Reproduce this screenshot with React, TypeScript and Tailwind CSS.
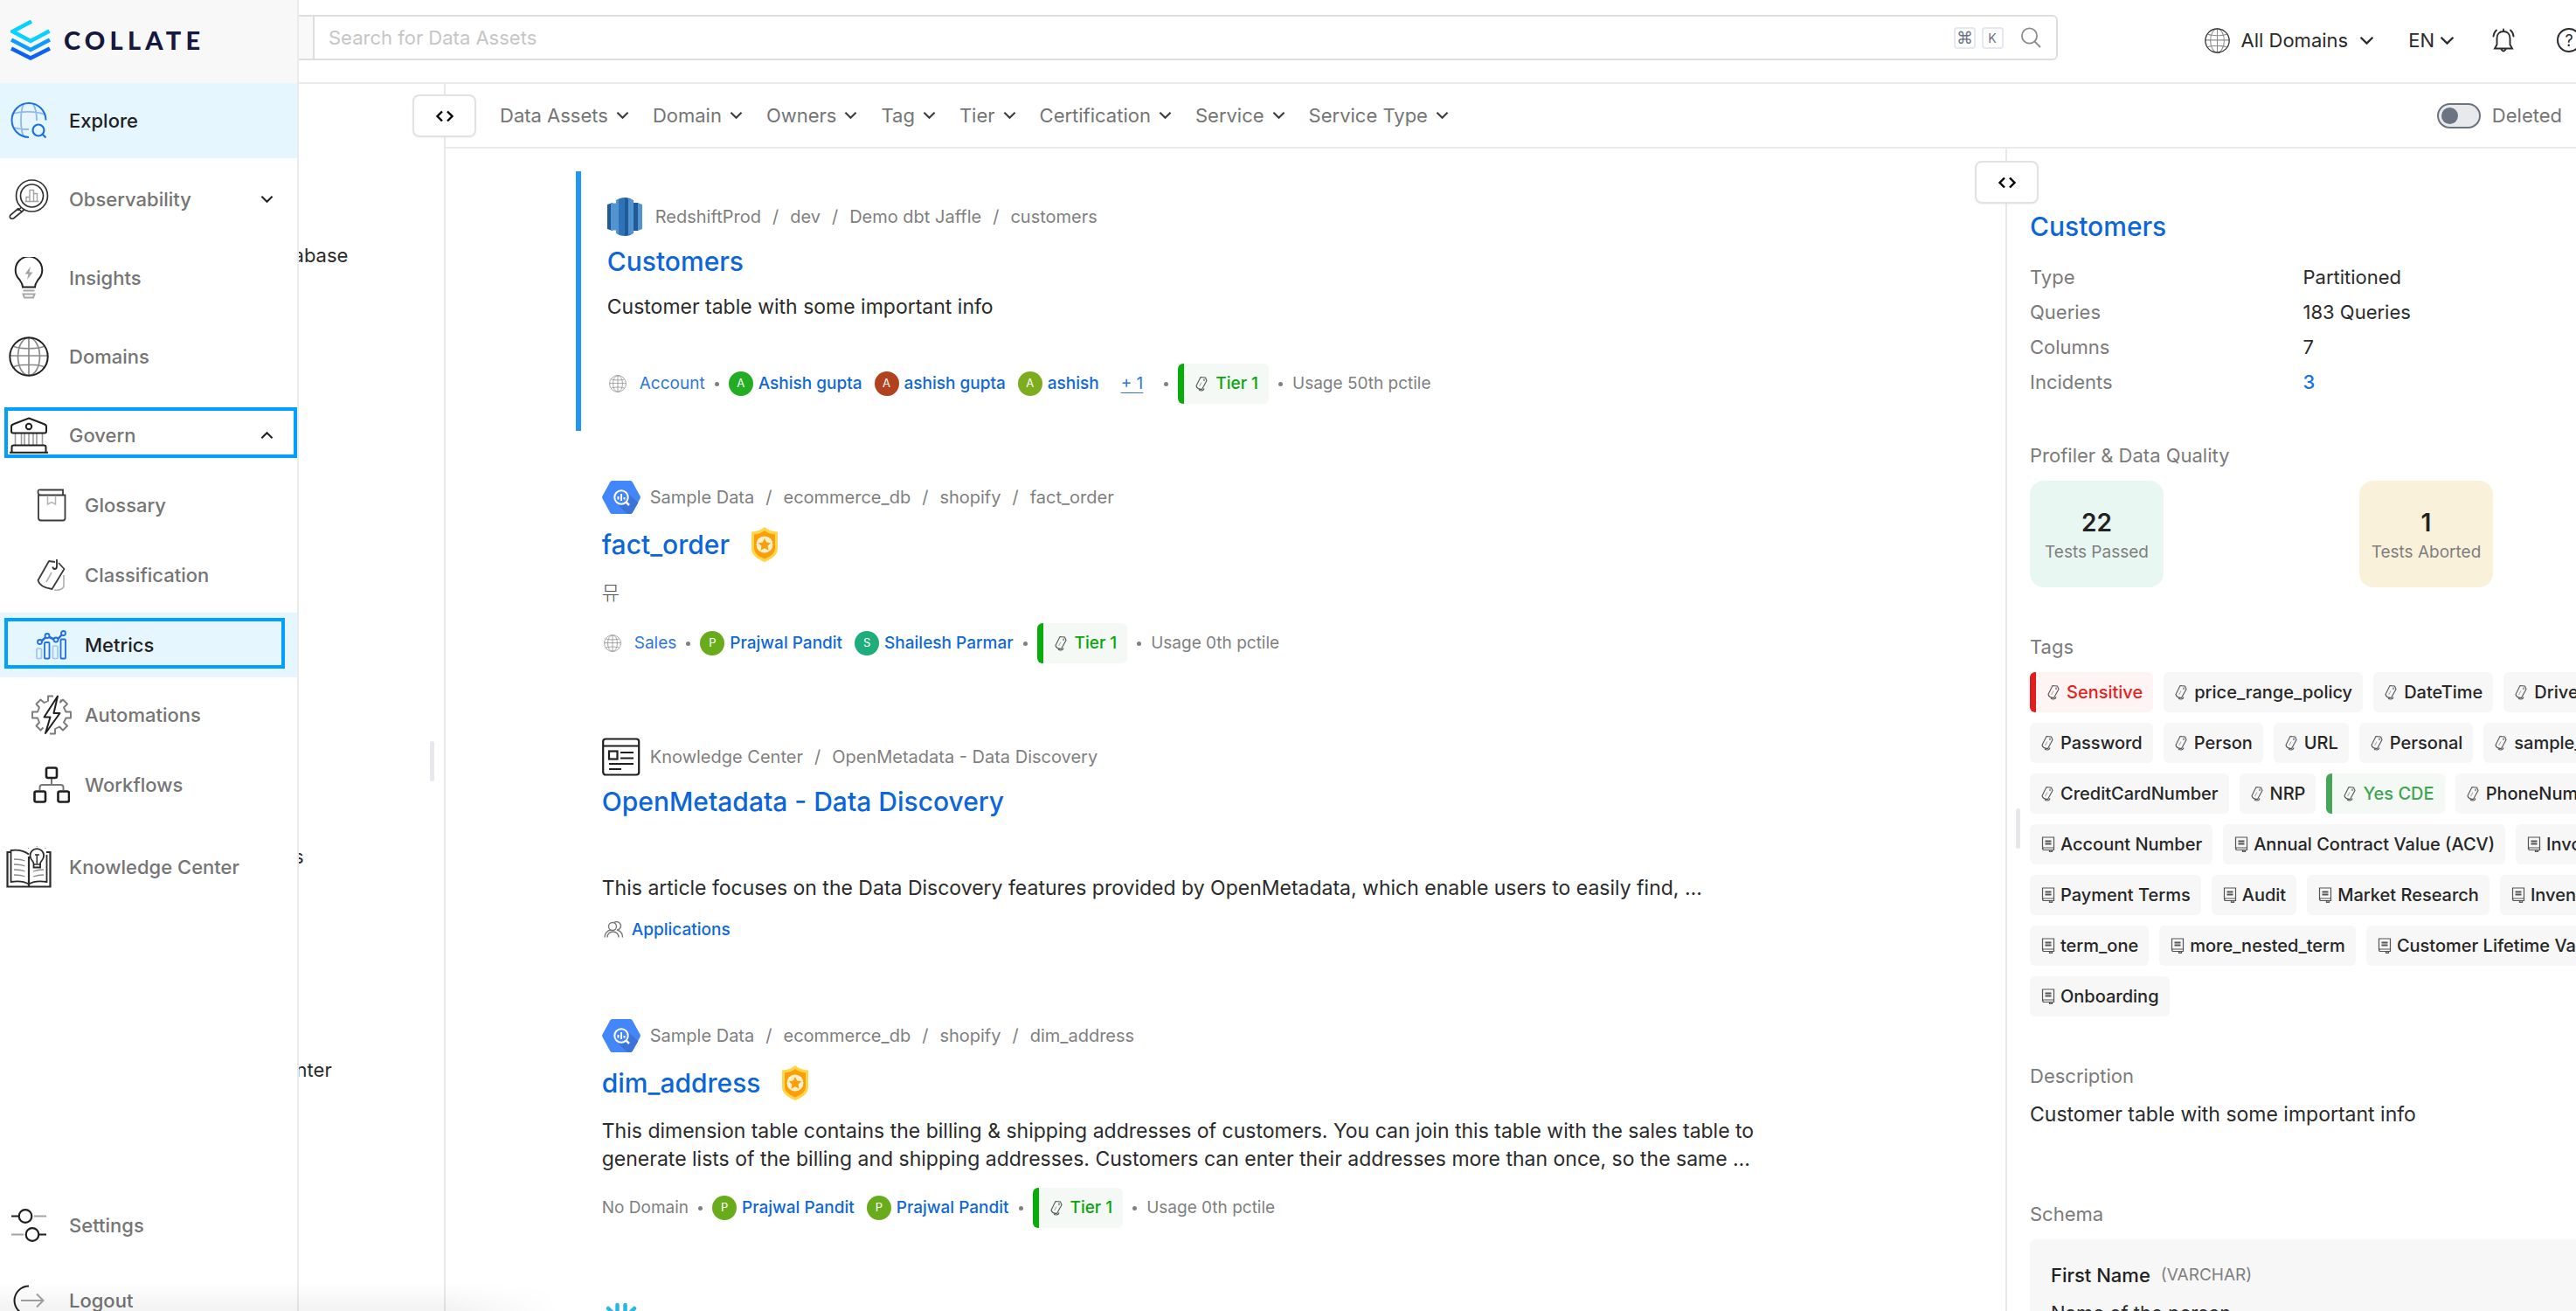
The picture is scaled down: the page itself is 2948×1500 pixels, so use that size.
import React from "react";

type IconProps = { className?: string };

/* ---------- Icons ---------- */

function Logo() {
  return (
    <svg viewBox="0 0 46 46" className="w-[46px] h-[46px]" fill="none" aria-hidden="true">
      <path d="M24 1.500 2.500 13 23 24 44.500 12.500" stroke="#08d0ff" strokeWidth="4.500" />
      <path d="M1 22.500 23 34 45 22.500" stroke="#0f9bfb" strokeWidth="4.500" />
      <path d="M1 32.500 23 43.500 45 32.500" stroke="#0c62f5" strokeWidth="4.500" />
    </svg>
  );
}

function ExploreIcon() {
  return (
    <svg viewBox="0 0 42 42" className="w-[42px] h-[42px]" fill="none" aria-hidden="true">
      <g stroke="#8fb8f2" strokeWidth="1.800">
        <path d="M15 2C11 10 11 31 15 39M26 2c3 5 4 12 4 19M3 13c10-3 26-3 36 1M4 29c6 2 12 2 17 2" />
      </g>
      <path d="M21 40A19.500 19.500 0 1 1 40.500 20.500" stroke="#1a6fe3" strokeWidth="2" />
      <circle cx="32" cy="32" r="6.500" stroke="#1a6fe3" strokeWidth="2.200" />
      <path d="m36.500 36.500 4 4" stroke="#1a6fe3" strokeWidth="2.200" />
    </svg>
  );
}

function ObservabilityIcon() {
  return (
    <svg viewBox="0 0 46 46" className="w-[46px] h-[46px]" fill="none" stroke="#333" strokeWidth="1.700" aria-hidden="true">
      <circle cx="26.500" cy="19" r="18" />
      <circle cx="26.500" cy="19" r="13" />
      <path d="M14 32.500 10.500 36M17.500 35 13.500 38.500M11 33.500l-9 7.500c-2 3 1 5.500 4 3.500l8.500-7M11 33.500l4.500 4.500" />
      <path d="M18.500 25.500h16M20 25.500v-5h4v5M24 25.500v-13h4.500v13M28.500 16.500h4v9" stroke="#a3a3a3" strokeWidth="1.400" />
    </svg>
  );
}

function InsightsIcon() {
  return (
    <svg viewBox="0 0 46 48" className="w-[46px] h-[48px]" fill="none" aria-hidden="true">
      <path d="M16 34.500c0-4-2-6-4-9a15.300 15.300 0 1 1 22 0c-2 3-4 5-4 9z" stroke="#222" strokeWidth="2" />
      <path d="m25 11-6.500 8.500h4L21 26l6.500-8.500h-4z" fill="#a3a3a3" />
      <path d="M16.500 38.500h13M16.500 42.500h13l-1.500 4H18z" stroke="#a8a8a8" strokeWidth="2" />
    </svg>
  );
}

function GlobeIcon({ className }: IconProps) {
  return (
    <svg viewBox="0 0 46 46" className={className} fill="none" aria-hidden="true">
      <g stroke="#8a8a8a" strokeWidth="1.700">
        <ellipse cx="23" cy="23" rx="12.500" ry="21.500" />
        <path d="M23 1.500v43M1.500 22h43M6 11.500c8 3 26 3 34 0M6 34.500c8-3 26-3 34 0" />
      </g>
      <circle cx="23" cy="23" r="21.700" stroke="currentColor" strokeWidth="2" />
    </svg>
  );
}

function GovernIcon() {
  return (
    <svg viewBox="0 0 44 42" className="w-[44px] h-[42px]" fill="none" aria-hidden="true">
      <g stroke="#9c9c9c" strokeWidth="1.600">
        <path d="M6.500 19v13M13.500 19v13M17 19v13M22 19v13M27 19v13M31 19v13M37.500 19v13" />
      </g>
      <g stroke="#1f1f1f" strokeWidth="2">
        <path d="M22 1.500 39 8q3 1 3 3v5.500q0 2-2 2H4q-2 0-2-2V11q0-2 3-3z" />
        <circle cx="22" cy="11" r="3.200" />
        <path d="M2.500 40v-5.500q0-2 2-2h35q2 0 2 2V40M0 40.700h44" />
      </g>
    </svg>
  );
}

function GlossaryIcon() {
  return (
    <svg viewBox="0 0 34 38" className="w-[34px] h-[38px]" fill="none" aria-hidden="true">
      <path d="M2 7v26.500q0 3 3 3h25q2.500 0 2.500-2.500V7.500H4.500Q1.500 7.500 1.500 4T4.500 1.500h25.500v6" stroke="#3b3b3b" strokeWidth="1.800" />
      <path d="M12.500 8v10l4.500-2.500 4.500 2.500V8" stroke="#b5b5b5" strokeWidth="1.500" />
    </svg>
  );
}

function ClassificationIcon() {
  return (
    <svg viewBox="0 0 34 38" className="w-[34px] h-[38px]" fill="none" aria-hidden="true">
      <path d="M20 36c7 1 11-2 11-5V19M17 16 11 27" stroke="#b0b0b0" strokeWidth="1.600" />
      <path d="M21 4 14 3 1.500 25q2 8 16 10L31.500 12 25 5" stroke="#3b3b3b" strokeWidth="1.800" strokeLinejoin="round" />
      <path d="M23 1v8q0 3-2.500 3-2 0-2-2.500" stroke="#2b2b2b" strokeWidth="1.800" />
    </svg>
  );
}

function MetricsIcon() {
  return (
    <svg viewBox="0 0 36 34" className="w-[36px] h-[34px]" fill="none" aria-hidden="true">
      <g stroke="#1f6fe5" strokeWidth="1.800">
        <rect x="10" y="14" width="5.500" height="18.500" rx="1" />
        <rect x="28.500" y="10.500" width="5.500" height="22" rx="1" />
        <path d="m6.500 12.500 4.500-4M15.500 8l5.500 2.500M25.500 10l4.500-5" strokeWidth="2.500" />
        <circle cx="4.500" cy="13.500" r="2.500" />
        <circle cx="13" cy="6.500" r="2.500" />
        <circle cx="23" cy="11" r="2.500" />
        <circle cx="31.500" cy="3.500" r="2.500" />
      </g>
      <g stroke="#9cc5fa" strokeWidth="1.700">
        <rect x="1" y="21" width="5.500" height="11.500" rx="1" />
        <rect x="19.500" y="18" width="5.500" height="14.500" rx="1" />
      </g>
    </svg>
  );
}

function AutomationsIcon() {
  return (
    <svg viewBox="0 0 46 46" className="w-[46px] h-[46px]" fill="none" strokeLinejoin="round" aria-hidden="true">
      <path
        d="M25 1.500h-6V7l-4.500 2L10.500 5.500 5.500 10.500 9 14.500 7 19.500H1v7h6l2 5-3.500 4 5 5 3-3M34 5.500l-1 3 3-3 5 5-4 4 2.500 5H45v7h-5.500l-2.500 5 4 4-5 5-4-4-5 2.500V44.500h-6"
        stroke="#7b7b7b"
        strokeWidth="1.900"
      />
      <path d="M30 1.500 14.500 25.500h7L16 44 32.500 21h-7z" stroke="#1f1f1f" strokeWidth="2" />
    </svg>
  );
}

function WorkflowsIcon() {
  return (
    <svg viewBox="0 0 42 42" className="w-[42px] h-[42px]" fill="none" aria-hidden="true">
      <path d="M21 13v8M7.500 27v-3q0-3 3-3h21q3 0 3 3v3" stroke="#777" strokeWidth="2" />
      <g stroke="#1f1f1f" strokeWidth="2.600">
        <rect x="15" y="1.500" width="12" height="11.500" rx="2" />
        <rect x="1.500" y="28.500" width="12.500" height="12" rx="2" />
        <rect x="28.500" y="28.500" width="12.500" height="12" rx="2" />
      </g>
    </svg>
  );
}

function KnowledgeIcon() {
  return (
    <svg viewBox="0 0 52 48" className="w-[52px] h-[48px]" fill="none" aria-hidden="true">
      <path d="M5 7H1.500v39.500h49V7H46M26 46V12" stroke="#2b2b2b" strokeWidth="2.200" />
      <path d="M26 43.500C20 40 11 40 5.500 41V5C13 4 20 5 26 9.500M46.500 10v31c-6-1-15-1-20.500 2.500" stroke="#2b2b2b" strokeWidth="1.800" />
      <path d="M9 15c4 0 9 .5 12.500 2M9 21c4 0 9 .5 12.500 2M9 27c4 0 9 .5 12.500 2M9 33c4 0 9 .5 12.500 2M31 29c4-1.500 8-2 12-2M31 35c4-1.500 8-2 12-2" stroke="#8b8b8b" strokeWidth="1.300" />
      <path d="M31.500 20c0-3-4-4-4-9a7.800 7.800 0 0 1 15.600 0c0 5-4 6-4 9v4.500h-7.600z" fill="#fff" stroke="#2b2b2b" strokeWidth="1.800" />
      <path d="M31.500 21h8M33 10h5M35.300 10v10" stroke="#2b2b2b" strokeWidth="1.500" />
      <path d="M35.300 1V0M26 3l-1-1M44.500 3l1-1" stroke="#8b8b8b" />
    </svg>
  );
}

function SettingsIcon() {
  return (
    <svg viewBox="0 0 42 38" className="w-[42px] h-[38px]" fill="none" aria-hidden="true">
      <path d="M27 8.500h14M1 29.500h14" stroke="#a3a3a3" strokeWidth="2" />
      <path d="M1 8.500h9M32 29.500h9" stroke="#1f1f1f" strokeWidth="2.200" />
      <circle cx="17" cy="8.500" r="7.300" stroke="#1f1f1f" strokeWidth="2.200" />
      <circle cx="25" cy="29.500" r="7.300" stroke="#1f1f1f" strokeWidth="2.200" />
    </svg>
  );
}

function LogoutIcon() {
  return (
    <svg viewBox="0 0 36 36" className="w-[36px] h-[36px]" fill="none" aria-hidden="true">
      <path d="M18 1.500A16.500 16.500 0 0 0 18 34.500" stroke="#1f1f1f" strokeWidth="2" />
      <path d="M9 18h25M27 10.500l7.500 7.500-7.500 7.500" stroke="#a3a3a3" strokeWidth="2" />
    </svg>
  );
}

function Chevron({ className }: IconProps) {
  return (
    <svg viewBox="0 0 16 10" className={className} fill="none" stroke="currentColor" strokeWidth="2.200" aria-hidden="true">
      <path d="m1.500 1.500 6.500 6.500 6.500-6.500" />
    </svg>
  );
}

function BellIcon() {
  return (
    <svg viewBox="0 0 26 28" className="w-[26px] h-[28px]" fill="none" stroke="#2b2b2b" strokeWidth="1.900" strokeLinecap="round" aria-hidden="true">
      <path d="M3 23.500h20L20.500 19v-7C20.500 7 17.500 4 13 4S5.500 7 5.500 12v7zM13 4V1.500M10.500 24.500q2.500 4 5 0M1.500 9.500q.5-4.500 3.500-7M24.500 9.500q-.5-4.500-3.500-7" />
    </svg>
  );
}

function SearchIcon() {
  return (
    <svg viewBox="0 0 24 24" className="w-[24px] h-[24px]" fill="none" stroke="#8b8b8b" strokeWidth="1.800" aria-hidden="true">
      <circle cx="10.500" cy="10" r="8.600" />
      <path d="m16.500 16.500 6.500 6.500" />
    </svg>
  );
}

function CodeArrows() {
  return (
    <svg viewBox="0 0 22 14" className="w-[22px] h-[14px]" fill="none" stroke="#000" strokeWidth="2.400" aria-hidden="true">
      <path d="M8 1.500 2.500 7 8 12.500M14 1.500 19.500 7 14 12.500" />
    </svg>
  );
}

function RedshiftIcon() {
  return (
    <svg viewBox="0 0 40 44" className="w-[40px] h-[44px]" aria-hidden="true">
      <path d="M0 8 6 6v32l-6-2z" fill="#205b98" />
      <path d="M4 6.500h6v31H4z" fill="#5294cf" />
      <path d="M40 8 35 6v32l5-2z" fill="#5294cf" />
      <path d="M30 6h5v32h-5z" fill="#205b98" />
      <path d="M10 3.500Q14 0 20 0v44q-6 0-10-3.500z" fill="#2e73b8" />
      <path d="M10 3.500 13 1.500v41l-3-2z" fill="#5294cf" />
      <path d="M20 0q6 0 10 3.500v37Q26 44 20 44z" fill="#205b98" />
      <path d="M24 1q4 .5 6 2.500v37q-2 2-6 2.500z" fill="#5294cf" />
    </svg>
  );
}

function BigQueryIcon() {
  return (
    <svg viewBox="0 0 44 38" className="w-[44px] h-[38px]" fill="none" aria-hidden="true">
      <path d="M11.500 0h21q1.500 0 2.300 1.500L43.500 17.500q.8 1.500 0 3L34.800 36.500Q34 38 32.500 38h-21q-1.500 0-2.300-1.500L.5 20.500q-.8-1.500 0-3L9.200 1.500Q10 0 11.500 0z" fill="#4386fa" />
      <path d="m28 13 13.500 12-6.700 11.500Q34 38 32.500 38H29L16 25.500z" fill="#3b73d9" />
      <circle cx="22" cy="19" r="7.700" fill="#4386fa" stroke="#fff" strokeWidth="2" />
      <path d="M18.500 18v3.500M22 15v8M25.500 19v2.500" stroke="#fff" strokeWidth="2" />
      <path d="m27.500 24.500 3.500 3.500" stroke="#fff" strokeWidth="2.500" />
    </svg>
  );
}

function ArticleIcon() {
  return (
    <svg viewBox="0 0 44 44" className="w-[44px] h-[44px]" fill="none" stroke="#1f1f1f" strokeWidth="2.200" aria-hidden="true">
      <rect x="1.200" y="1.500" width="41" height="41" rx="3" />
      <path d="M1 9.500h41M21 17h15M21 23.500h15M8 30h28M8 36h14" />
      <rect x="8" y="15.500" width="9.500" height="9" />
    </svg>
  );
}

function ShieldBadge() {
  return (
    <svg viewBox="0 0 32 40" className="w-[32px] h-[40px]" aria-hidden="true">
      <path d="M16 0Q22 5 31 5.500V25Q31 34 16 40 1 34 1 25V5.500Q10 5 16 0z" fill="#ffd54a" />
      <path d="M16 4Q21 8 28 8.500V24.500Q28 32 16 36.500 4 32 4 24.500V8.500Q11 8 16 4z" fill="#fb9e08" />
      <circle cx="16" cy="20" r="9.500" fill="#fff1cc" />
      <path d="m16 13 2.200 4.600 5 .6-3.700 3.500 1 5L16 24.200l-4.500 2.500 1-5-3.700-3.500 5-.6z" fill="#fb9e08" />
    </svg>
  );
}

function PeopleIcon() {
  return (
    <svg viewBox="0 0 23 20" className="w-[23px] h-[20px]" fill="none" stroke="#777" strokeWidth="1.400" aria-hidden="true">
      <circle cx="10" cy="6" r="4.500" />
      <path d="M12 1.500a4.700 4.700 0 1 1 3 8.500c4 1 6.500 4 6.500 8.500M1 18.500c0-4.500 3-8 7-8.500M4 18.500c0-4 3-6.500 6.500-6.500s6.500 2.500 6.500 6.500" />
    </svg>
  );
}

function SnowflakeIcon() {
  return (
    <svg viewBox="0 0 44 44" className="w-[44px] h-[44px]" fill="none" stroke="#29b5e8" strokeWidth="4.500" strokeLinecap="round" strokeLinejoin="round" aria-hidden="true">
      <path d="M17.500 3v10M26.500 3v10M7 7l8 8M37 7l-8 8M4 19l8 3-8 3M40 19l-8 3 8 3M17.500 41V31M26.500 41V31" />
    </svg>
  );
}

function TagIcon() {
  return (
    <svg viewBox="0 0 14 18" className="w-[14px] h-[18px] shrink-0" fill="none" stroke="#555" strokeWidth="1.100" strokeLinejoin="round" aria-hidden="true">
      <path d="M6 1.500 11.500 2 13 5.500 7.500 15.500Q2 15.500 1 11.500z" />
      <path d="M4 16.500q5 1.500 6-2M10 3.500v2.500" />
      <path d="M7 7.500 4.500 12" stroke="#b0b0b0" />
    </svg>
  );
}

function TermIcon() {
  return (
    <svg viewBox="0 0 16 18" className="w-[16px] h-[18px] shrink-0" fill="none" stroke="#555" strokeWidth="1.200" aria-hidden="true">
      <path d="M1.500 14.500V1h13v14.500H2.500q-1.500-1.500 0-2.500h12" />
      <path d="M4.500 5.500h7M4.500 8.500h7" strokeWidth="1.800" />
      <path d="M9.500 15.500v2.500l1.500-1 1.500 1v-2.500" />
    </svg>
  );
}

/* ---------- Sidebar ---------- */

function NavRow({ icon, label, active, expanded, outlined }: { icon: React.ReactNode; label: string; active?: boolean; expanded?: boolean; outlined?: boolean }) {
  const body = (
    <>
      <span className="flex w-[70px] shrink-0 items-center justify-center pr-[4px]">{icon}</span>
      <span className={active ? "pl-[9px] text-[#222]" : "pl-[9px] text-[#757575]"}>{label}</span>
      {expanded !== undefined && (
        <span className="ml-auto pr-[27px] text-[#222]">
          <Chevron className={expanded ? "h-[10px] w-[15px] rotate-180" : "h-[10px] w-[15px]"} />
        </span>
      )}
      {outlined && <span className="pointer-events-none absolute top-[11px] right-0 left-[5px] h-[58px] border-4 border-[#00a0ff]" />}
    </>
  );
  const cls = active
    ? "relative flex h-[86px] w-full items-center bg-[#e5f6fe] text-left font-medium"
    : "relative flex h-[86px] w-full items-center text-left font-medium";
  return expanded !== undefined ? (
    <button type="button" aria-expanded={expanded} className={cls}>{body}</button>
  ) : (
    <a href="#" className={cls}>{body}</a>
  );
}

function SubRow({ icon, label, active }: { icon: React.ReactNode; label: string; active?: boolean }) {
  return (
    <a href="#" className={active ? "relative flex h-[74px] items-center bg-[#e5f6fe] font-medium text-[#222]" : "relative flex h-[74px] items-center font-medium text-[#757575]"}>
      <span className="ml-[32px] flex w-[54px] shrink-0 items-center justify-center">{icon}</span>
      <span className="pl-[11px]">{label}</span>
      {active && <span className="pointer-events-none absolute top-[6px] right-[14px] left-[5px] h-[58px] border-4 border-[#00a0ff]" />}
    </a>
  );
}

function Sidebar() {
  return (
    <aside className="absolute inset-y-0 left-0 z-20 flex w-[342px] flex-col border-r-2 border-[#ebebeb] bg-white">
      <div className="flex h-[95px] shrink-0 items-center gap-[15px] bg-[#f8f8f8] pb-[3px] pl-[12px]">
        <Logo />
        <span className="font-[Lato] text-[29px] font-black tracking-[0.18em] text-[#16193f]">COLLATE</span>
      </div>
      <nav aria-label="Main" className="flex grow flex-col">
        <div className="flex flex-col gap-1">
          <NavRow icon={<ExploreIcon />} label="Explore" active />
          <NavRow icon={<ObservabilityIcon />} label="Observability" expanded={false} />
          <NavRow icon={<InsightsIcon />} label="Insights" />
          <NavRow icon={<GlobeIcon className="h-[46px] w-[46px] text-[#222]" />} label="Domains" />
          <NavRow icon={<GovernIcon />} label="Govern" expanded outlined />
        </div>
        <div className="flex flex-col gap-[6px]">
          <SubRow icon={<GlossaryIcon />} label="Glossary" />
          <SubRow icon={<ClassificationIcon />} label="Classification" />
          <SubRow icon={<MetricsIcon />} label="Metrics" active />
          <SubRow icon={<AutomationsIcon />} label="Automations" />
          <SubRow icon={<WorkflowsIcon />} label="Workflows" />
        </div>
        <div className="mt-[14px]">
          <NavRow icon={<KnowledgeIcon />} label="Knowledge Center" />
        </div>
        <div className="mt-auto -mb-[31px]">
          <NavRow icon={<SettingsIcon />} label="Settings" />
          <NavRow icon={<LogoutIcon />} label="Logout" />
        </div>
      </nav>
    </aside>
  );
}

/* ---------- Header ---------- */

function Header() {
  return (
    <header className="flex h-[96px] shrink-0 items-start border-b-2 border-[#ebebeb] pl-[340px]">
      <div className="mt-[17px] flex h-[52px] min-w-0 grow items-stretch rounded-r-md border-2 border-l-0 border-[#dedede]">
        <div className="w-[20px] border-r-2 border-[#dedede] bg-[#f9f9f9]" />
        <input type="search" aria-label="Search for Data Assets" placeholder="Search for Data Assets" className="min-w-0 grow bg-transparent px-[16px] outline-none placeholder:text-[#c6c6c6]" />
        <div className="flex items-center gap-[7px] pr-[17px] text-[#6b7285]">
          <kbd className="flex size-[25px] items-center justify-center rounded-sm border-2 border-[#e3e8f1] font-sans text-[19px]">⌘</kbd>
          <kbd className="flex size-[25px] items-center justify-center rounded-sm border-2 border-[#e3e8f1] font-[Inter] text-[14px]">K</kbd>
          <button type="button" aria-label="Search" className="ml-[12px]"><SearchIcon /></button>
        </div>
      </div>
      <div className="-mr-[6px] flex h-[92px] shrink-0 items-center pl-[168px] text-[#2b2b2b]">
        <button type="button" className="flex items-center">
          <GlobeIcon className="h-[29px] w-[29px]" />
          <span className="pr-[13px] pl-[13px]">All Domains</span>
          <Chevron className="h-[11px] w-[17px]" />
        </button>
        <button type="button" className="ml-[39px] flex items-center gap-[6px]">
          <span>EN</span>
          <Chevron className="h-[11px] w-[17px]" />
        </button>
        <button type="button" aria-label="Notifications" className="ml-[43px]"><BellIcon /></button>
        <button type="button" aria-label="Help" className="ml-[48px] flex size-[28px] items-center justify-center rounded-full border-2 border-[#2b2b2b] text-[18px]">?</button>
      </div>
    </header>
  );
}

/* ---------- Results ---------- */

const FILTERS = ["Data Assets", "Domain", "Owners", "Tag", "Tier", "Certification", "Service", "Service Type"];

type Owner = { name: string; initial: string; color: string };

function Crumbs({ icon, items }: { icon: React.ReactNode; items: string[] }) {
  return (
    <div className="flex h-[44px] items-center">
      <span className="flex w-[44px] shrink-0 items-center">{icon}</span>
      <ol className="flex items-center pl-[11px] text-[20px] text-[#7f7f7f]">
        {items.map((item, i) => (
          <li key={item}>
            {i > 0 && <span className="px-[13px]">/</span>}
            <a href="#">{item}</a>
          </li>
        ))}
      </ol>
    </div>
  );
}

function Dot() {
  return <span className="mx-[11px] size-[5px] shrink-0 rounded-full bg-[#808080]" />;
}

function Meta({ domain, owners, more, usage }: { domain?: string; owners: Owner[]; more?: string; usage: string }) {
  return (
    <div className="flex h-[46px] items-center text-[19px]">
      {domain ? (
        <>
          <GlobeIcon className="mr-[15px] ml-[2px] h-[20px] w-[20px] text-[#9a9a9a]" />
          <a href="#" className="text-[#2e77dc]">{domain}</a>
        </>
      ) : (
        <span className="text-[#7f7f7f]">No Domain</span>
      )}
      <Dot />
      <span className="flex items-center gap-[14px]">
        {owners.map((o, i) => (
          <a href="#" key={i} className="flex items-center gap-[6px] font-medium text-[#0f68da]">
            <span className="flex size-[28px] items-center justify-center rounded-full text-[13px] font-normal text-white" style={{ backgroundColor: o.color }}>{o.initial}</span>
            {o.name}
          </a>
        ))}
      </span>
      {more && <button type="button" className="mr-[13px] ml-[25px] text-[#2e77dc] underline underline-offset-4">{more}</button>}
      <Dot />
      <span className="flex h-[46px] items-center gap-[9px] rounded-md border-l-[7px] border-[#08ad0b] bg-[#f4f9f5] pr-[12px] pl-[13px] font-medium text-[#08a60b]">
        <TagIcon />
        Tier 1
      </span>
      <Dot />
      <span className="text-[#7f7f7f]">{usage}</span>
    </div>
  );
}

function Title({ children, certified }: { children: string; certified?: boolean }) {
  return (
    <h2 className={certified ? "mt-[12px] flex h-[40px] items-center gap-[24px]" : "mt-[12px] flex h-[34px] items-center"}>
      <a href="#" className="text-[30px] leading-[34px] font-medium text-[#0c66da]">{children}</a>
      {certified && <ShieldBadge />}
    </h2>
  );
}

const PRAJWAL: Owner = { name: "Prajwal Pandit", initial: "P", color: "#68ac1c" };
const SHAILESH: Owner = { name: "Shailesh Parmar", initial: "S", color: "#20ad7c" };

function Results() {
  return (
    <main className="mx-auto flex w-10/12 flex-col gap-[24px] pt-[26px]">
      <article className="border-l-[6px] border-[#2196f3] pt-[30px] pb-[31px] pl-[30px]">
        <Crumbs icon={<RedshiftIcon />} items={["RedshiftProd", "dev", "Demo dbt Jaffle", "customers"]} />
        <Title>Customers</Title>
        <p className="mt-[19px] text-[23px] leading-[32px]">Customer table with some important info</p>
        <div className="mt-[49px]">
          <Meta
            domain="Account"
            owners={[
              { name: "Ashish gupta", initial: "A", color: "#22ad22" },
              { name: "ashish gupta", initial: "A", color: "#b0421e" },
              { name: "ashish", initial: "A", color: "#7dac1e" },
            ]}
            more="+ 1"
            usage="Usage 50th pctile"
          />
        </div>
      </article>

      <article className="pt-[30px] pb-[31px] pl-[30px]">
        <Crumbs icon={<BigQueryIcon />} items={["Sample Data", "ecommerce_db", "shopify", "fact_order"]} />
        <Title certified>fact_order</Title>
        <p className="mt-[19px] leading-[32px] font-light text-[#555]">뮤</p>
        <div className="mt-[19px]">
          <Meta domain="Sales" owners={[PRAJWAL, SHAILESH]} usage="Usage 0th pctile" />
        </div>
      </article>

      <article className="pt-[30px] pb-[31px] pl-[30px]">
        <Crumbs icon={<ArticleIcon />} items={["Knowledge Center", "OpenMetadata - Data Discovery"]} />
        <Title>OpenMetadata - Data Discovery</Title>
        <p className="mt-[66px] text-[23px] leading-[32px]">This article focuses on the Data Discovery features provided by OpenMetadata, which enable users to easily find, …</p>
        <a href="#" className="mt-[18px] flex h-[28px] items-center gap-[9px] pl-[2px] text-[19px] font-medium text-[#0f68da]">
          <PeopleIcon />
          Applications
        </a>
      </article>

      <article className="pt-[30px] pb-[31px] pl-[30px]">
        <Crumbs icon={<BigQueryIcon />} items={["Sample Data", "ecommerce_db", "shopify", "dim_address"]} />
        <Title certified>dim_address</Title>
        <p className="mt-[19px] text-[23px] leading-[32px]">
          This dimension table contains the billing &amp; shipping addresses of customers. You can join this table with the sales table to
          <br />
          generate lists of the billing and shipping addresses. Customers can enter their addresses more than once, so the same …
        </p>
        <div className="mt-[17px]">
          <Meta owners={[PRAJWAL, PRAJWAL]} usage="Usage 0th pctile" />
        </div>
      </article>

      <article className="pt-[30px] pb-[31px] pl-[30px]">
        <SnowflakeIcon />
      </article>
    </main>
  );
}

/* ---------- Summary panel ---------- */

type Chip = { label: string; kind?: "term" | "red" | "green" };

const CHIP_ROWS: Chip[][] = [
  [{ label: "Sensitive", kind: "red" }, { label: "price_range_policy" }, { label: "DateTime" }, { label: "DriverLicense" }],
  [{ label: "Password" }, { label: "Person" }, { label: "URL" }, { label: "Personal" }, { label: "sample_data" }],
  [{ label: "CreditCardNumber" }, { label: "NRP" }, { label: "Yes CDE", kind: "green" }, { label: "PhoneNumber" }],
  [{ label: "Account Number", kind: "term" }, { label: "Annual Contract Value (ACV)", kind: "term" }, { label: "Invoice", kind: "term" }],
  [{ label: "Payment Terms", kind: "term" }, { label: "Audit", kind: "term" }, { label: "Market Research", kind: "term" }, { label: "Inventory", kind: "term" }],
  [{ label: "term_one", kind: "term" }, { label: "more_nested_term", kind: "term" }, { label: "Customer Lifetime Value", kind: "term" }],
  [{ label: "Onboarding", kind: "term" }],
];

const CHIP_STYLE = {
  plain: "bg-[#f7f7f7] text-[#262626]",
  term: "bg-[#f7f7f7] text-[#262626]",
  red: "border-l-[7px] border-[#e21d1d] bg-[#fff4f4] text-[#e2231f]",
  green: "border-l-[7px] border-[#46a758] bg-[#f4f9f5] text-[#3fa552]",
};

function TagChip({ label, kind }: Chip) {
  return (
    <li className={`flex h-[46px] shrink-0 items-center rounded-md pr-[12px] pl-[13px] text-[20px] font-medium whitespace-nowrap ${CHIP_STYLE[kind ?? "plain"]}`}>
      {kind === "term" ? <TermIcon /> : <TagIcon />}
      <span className={kind === "term" ? "pl-[6px]" : "pl-[8px]"}>{label}</span>
    </li>
  );
}

function Stat({ value, label, className }: { value: string; label: string; className: string }) {
  return (
    <div className={`flex h-[122px] w-[153px] flex-col items-center justify-center rounded-2xl pt-[6px] ${className}`}>
      <span className="text-[28px] leading-[36px] font-semibold text-[#222]">{value}</span>
      <span className="text-[19px] leading-[32px] text-[#7f7f7f]">{label}</span>
    </div>
  );
}

function DragHandle() {
  return <span className="h-[46px] w-[5px] rounded-full bg-[#e8e8ec]" />;
}

function ToggleButton({ label }: { label: string }) {
  return (
    <button type="button" aria-label={label} className="flex h-[49px] w-[73px] items-center justify-center rounded-lg border-2 border-[#e2e2e2] bg-white shadow-xs">
      <CodeArrows />
    </button>
  );
}

const FACTS = [
  ["Type", "Partitioned"],
  ["Queries", "183 Queries"],
  ["Columns", "7"],
  ["Incidents", "3"],
];

function Summary() {
  return (
    <aside className="relative w-[653px] shrink-0 border-l-2 border-[#e9e9e9] pt-[72px] pl-[26px]">
      <div className="absolute top-[14px] -left-[37px]"><ToggleButton label="Toggle summary panel" /></div>
      <div className="absolute top-[755px] left-[10px] flex"><DragHandle /></div>
      <h2 className="text-[30px] leading-[34px] font-medium"><a href="#" className="text-[#0c66da]">Customers</a></h2>
      <dl className="mt-[21px]">
        {FACTS.map(([k, v]) => (
          <div key={k} className="grid h-[40px] grid-cols-2 items-center">
            <dt className="text-[#7b7b7b]">{k}</dt>
            <dd className={k === "Incidents" ? "font-medium text-[#1570ef]" : ""}>{v}</dd>
          </div>
        ))}
      </dl>
      <h3 className="mt-[48px] leading-[32px] text-[#7b7b7b]">Profiler &amp; Data Quality</h3>
      <div className="mt-[13px] flex gap-[224px]">
        <Stat value="22" label="Tests Passed" className="bg-[#e9f7f2]" />
        <Stat value="1" label="Tests Aborted" className="shrink-0 bg-[#faf1da]" />
      </div>
      <h3 className="mt-[52px] leading-[32px] text-[#7b7b7b]">Tags</h3>
      <div className="mt-[13px] flex flex-col gap-[12px] overflow-hidden">
        {CHIP_ROWS.map((row, i) => (
          <ul key={i} className="flex gap-[12px]">
            {row.map((chip) => <TagChip key={chip.label} {...chip} />)}
          </ul>
        ))}
      </div>
      <h3 className="mt-[52px] leading-[32px] text-[#7b7b7b]">Description</h3>
      <p className="mt-[12px] text-[23px] leading-[32px]">Customer table with some important info</p>
      <h3 className="mt-[82px] leading-[32px] text-[#7b7b7b]">Schema</h3>
      <div className="mt-[13px] rounded-l-md bg-[#f7f7f7] px-[24px] pt-[25px] pb-[24px]">
        <div className="flex items-center gap-[12px] leading-[32px]">
          <span className="font-medium text-[#222]">First Name</span>
          <span className="text-[19px] text-[#7f7f7f]">(VARCHAR)</span>
        </div>
        <p className="mt-[11px] leading-[32px]">Name of the person</p>
      </div>
    </aside>
  );
}

/* ---------- Page ---------- */

export default function App() {
  return (
    <div className="relative flex h-screen flex-col overflow-hidden bg-white font-[Inter,'Noto_Sans_CJK_KR',sans-serif] text-[22px] text-[#2b2b2b]">
      <Sidebar />
      <Header />
      <div className="flex min-h-0 grow">
        <section aria-label="Asset tree" className="relative w-[510px] shrink-0 border-r-2 border-[#e9e9e9]">
          <ul className="pt-[180px]">
            <li className="pl-[300px] leading-[32px]">Database</li>
            <li className="mt-[656px] pl-[279px] leading-[32px]">Topics</li>
            <li className="mt-[212px] pl-[187px] leading-[32px]">Knowledge Center</li>
          </ul>
          <div className="absolute top-[752px] right-[11px] flex"><DragHandle /></div>
          <div className="absolute top-[12px] -right-[37px] z-10"><ToggleButton label="Toggle asset tree" /></div>
        </section>
        <div className="flex min-w-0 grow flex-col">
          <div className="flex h-[74px] shrink-0 items-center justify-between border-b-2 border-[#ebebeb] pr-[16px] pl-[62px] text-[#757575]">
            <div className="flex gap-[27px]">
              {FILTERS.map((f) => (
                <button type="button" key={f} className="flex items-center gap-[9px]">
                  {f}
                  <Chevron className="h-[10px] w-[15px] text-[#3b3b3b]" />
                </button>
              ))}
            </div>
            <label className="flex items-center gap-[13px]">
              <input type="checkbox" role="switch" className="flex h-[29px] w-[50px] appearance-none items-center rounded-full border-2 border-[#6b7280] bg-[#e8e9eb] pl-[3px] before:size-[19px] before:rounded-full before:bg-[#6b7280]" />
              Deleted
            </label>
          </div>
          <div className="flex min-h-0 grow">
            <div className="min-w-0 grow"><Results /></div>
            <Summary />
          </div>
        </div>
      </div>
      <div className="pointer-events-none absolute bottom-0 left-0 z-30 h-[32px] w-[640px] bg-linear-to-t from-black/5 to-transparent mask-r-from-80%" />
    </div>
  );
}
